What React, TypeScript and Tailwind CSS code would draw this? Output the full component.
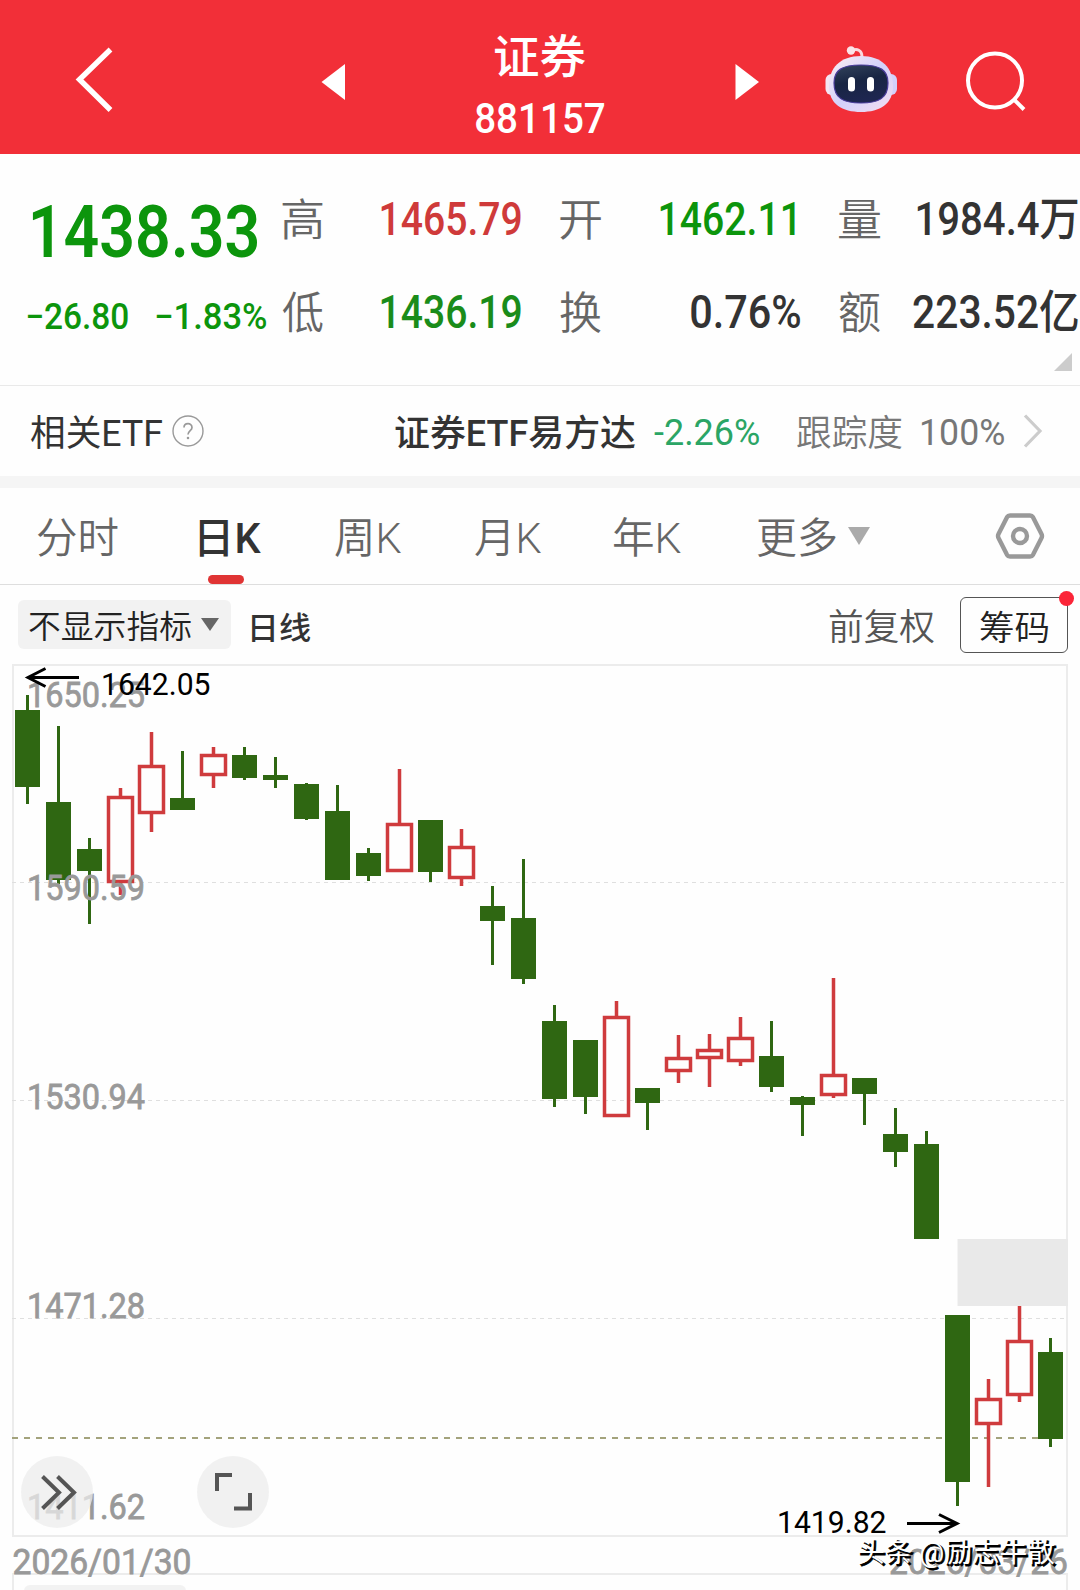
import { useLayoutEffect, useRef } from "react";
import type { ReactNode } from "react";

/** Text condensed or widened so that its ink spans exactly `w` pixels. */
function Fit({ w, className = "", children }: { w: number; className?: string; children: string }) {
  const ref = useRef<HTMLSpanElement>(null);
  useLayoutEffect(() => {
    const el = ref.current;
    const ctx = document.createElement("canvas").getContext("2d");
    if (!el || !ctx) return;
    const cs = getComputedStyle(el);
    ctx.font = `${cs.fontWeight} ${cs.fontSize} ${cs.fontFamily}`;
    const m = ctx.measureText(children);
    const k = w / (m.actualBoundingBoxLeft + m.actualBoundingBoxRight);
    el.style.transform = `translateX(${m.actualBoundingBoxLeft * k}px) scaleX(${k})`;
  }, [w, children]);
  return (
    <span className={`block shrink-0 leading-none ${className}`} style={{ width: w }}>
      <span ref={ref} className="inline-block origin-left whitespace-nowrap">
        {children}
      </span>
    </span>
  );
}

function Header() {
  return (
    <header className="flex h-[154px] items-start bg-[#f22f38] text-white">
      <svg className="ml-[72px] mt-[44px] h-[72px] w-[44px] shrink-0" viewBox="0 0 44 72" fill="none" stroke="#fff" strokeWidth="5.4">
        <path d="M38.5 5.5 L7.5 35.5 L38.5 66" />
      </svg>
      <svg className="ml-[205px] mt-[64px] h-[36px] w-[25px] shrink-0" viewBox="0 0 25 36" fill="#fff">
        <path d="M0.5 18 L24 0 V36 Z" />
      </svg>
      <div className="ml-[130px] flex w-[129px] flex-col items-center">
        <Fit w={91} className="mt-[34px] text-[46px] font-medium">证券</Fit>
        <Fit w={129} className="mt-[18px] text-[42px] font-medium">881157</Fit>
      </div>
      <svg className="ml-[130px] mt-[64px] h-[36px] w-[25px] shrink-0" viewBox="0 0 25 36" fill="#fff">
        <path d="M24 18 L0.5 0 V36 Z" />
      </svg>
      <svg className="ml-[63px] mt-[44px] h-[72px] w-[76px] shrink-0" viewBox="823 44 76 72">
        <defs>
          <linearGradient id="shell" x1="0" y1="0" x2="1" y2="1">
            <stop offset="0" stopColor="#fdeef2" />
            <stop offset="0.5" stopColor="#d3d2fb" />
            <stop offset="1" stopColor="#f3dcf0" />
          </linearGradient>
          <linearGradient id="visor" x1="0" y1="0" x2="0.3" y2="1">
            <stop offset="0" stopColor="#33445c" />
            <stop offset="0.5" stopColor="#182543" />
            <stop offset="1" stopColor="#1e2650" />
          </linearGradient>
        </defs>
        <path d="M851 51 C857 48 862 50 862 57" fill="none" stroke="#fbd9de" strokeWidth="3" />
        <circle cx="851" cy="50.5" r="4.2" fill="#fbe3e8" />
        <rect x="825.5" y="74" width="12" height="21" rx="6" fill="#f4e6f3" />
        <rect x="885" y="74" width="12" height="21" rx="6" fill="#d3d0fb" />
        <path d="M861 56 C882 56 893 68 893 86 C893 104 880 112 861 112 C842 112 829 104 829 86 C829 68 840 56 861 56 Z" fill="url(#shell)" />
        <path d="M861 65 C880 65 888 70 888 83 C888 98 879 103 861 103 C843 103 834 98 834 83 C834 70 842 65 861 65 Z" fill="url(#visor)" stroke="#4a3d9c" strokeWidth="1.2" />
        <rect x="848" y="77" width="7" height="14.5" rx="3.5" fill="#fff" />
        <rect x="867" y="77" width="7" height="14.5" rx="3.5" fill="#fff" />
      </svg>
      <svg className="ml-[63px] mt-[48px] h-[66px] w-[68px] shrink-0" viewBox="962 48 68 66" fill="none" stroke="#fff" strokeWidth="4">
        <circle cx="995" cy="80.5" r="27" />
        <path d="M1013.5 99 L1024 109.5" />
      </svg>
    </header>
  );
}

function Cell({ label, w, color, children }: { label: string; w: number; color: string; children: string }) {
  return (
    <div className="flex h-[46px] items-center justify-between">
      <Fit w={41} className="pt-[3px] text-[44px] font-[350] text-[#666]">{label}</Fit>
      <Fit w={w} className={`text-[46px] font-medium ${color}`}>{children}</Fit>
    </div>
  );
}

function Quote() {
  return (
    <section className="relative flex h-[232px] border-b border-[#e9e9e9]">
      <div className="w-[282px] shrink-0 text-[#0c950c]">
        <Fit w={224} className="ml-[33px] mt-[42px] text-[73px] font-semibold">1438.33</Fit>
        <div className="ml-[27px] mt-[30px] flex gap-[28px]">
          <Fit w={101} className="text-[36px] font-medium">−26.80</Fit>
          <Fit w={110} className="text-[36px] font-medium">−1.83%</Fit>
        </div>
      </div>
      <div className="mr-[2px] mt-[42px] grid h-[139px] grow grid-cols-3 content-between gap-x-[39px]">
        <Cell label="高" w={140} color="text-[#cf3a3a]">1465.79</Cell>
        <Cell label="开" w={135} color="text-[#0c950c] mr-[5px]">1462.11</Cell>
        <Cell label="量" w={161} color="text-[#333]">1984.4万</Cell>
        <Cell label="低" w={140} color="text-[#1a8c1a]">1436.19</Cell>
        <Cell label="换" w={109} color="text-[#333]">0.76%</Cell>
        <Cell label="额" w={165} color="text-[#333]">223.52亿</Cell>
      </div>
      <svg className="absolute bottom-[14px] right-[8px] h-[18px] w-[18px]" viewBox="0 0 18 18">
        <path d="M18 0 V18 H0 Z" fill="#ccc" />
      </svg>
    </section>
  );
}

function EtfRow() {
  return (
    <section className="flex h-[90px] items-center pl-[31px] text-[36px] text-[#333]">
      <Fit w={131} className="pt-[5px]">相关ETF</Fit>
      <svg className="ml-[10px] h-[32px] w-[32px]" viewBox="0 0 32 32" fill="none" stroke="#999" strokeWidth="1.4">
        <circle cx="16" cy="16" r="15" />
        <path d="M12 12.6 C12 7.4 20 7.4 20 12.4 C20 15.6 16 15.6 16 19.6" strokeWidth="1.7" />
        <circle cx="16" cy="23" r="0.6" fill="#999" />
      </svg>
      <Fit w={240} className="ml-[191px] pt-[5px] font-medium">证券ETF易方达</Fit>
      <Fit w={105} className="ml-[19px] pt-[4px] text-[#2ba565]">-2.26%</Fit>
      <Fit w={105} className="ml-[38px] pt-[5px] font-[350] text-[#777]">跟踪度</Fit>
      <Fit w={82} className="ml-[20px] pt-[4px] text-[#777]">100%</Fit>
      <svg className="ml-[18px] h-[34px] w-[22px]" viewBox="0 0 22 34" fill="none" stroke="#ccc" strokeWidth="3.2">
        <path d="M3 1.5 L18 17 L3 32.5" />
      </svg>
    </section>
  );
}

function Tab({ w, ml, active = false, children }: { w: number; ml: string; active?: boolean; children: string }) {
  return (
    <div className={`relative flex h-full items-center ${ml}`}>
      <Fit w={w} className={active ? "pt-[5px] text-[42px] font-medium text-[#333]" : "pt-[5px] text-[42px] font-[350] text-[#666]"}>{children}</Fit>
      {active && <span className="absolute bottom-0 left-[8px] h-[9px] w-[36px] rounded-full bg-[#e03434]" />}
    </div>
  );
}

function Tabs() {
  return (
    <nav className="flex h-[97px] items-center border-b border-[#dedede]">
      <Tab w={81} ml="ml-[37px]">分时</Tab>
      <Tab w={61} ml="ml-[82px]" active>日K</Tab>
      <Tab w={66} ml="ml-[74px]">周K</Tab>
      <Tab w={66} ml="ml-[74px]">月K</Tab>
      <Tab w={67} ml="ml-[73px]">年K</Tab>
      <Tab w={78} ml="ml-[77px]">更多</Tab>
      <svg className="ml-[12px] h-[18px] w-[22px]" viewBox="0 0 22 18">
        <path d="M0 0 H22 L11 18 Z" fill="#aaa" />
      </svg>
      <svg className="ml-[125px] h-[48px] w-[50px]" viewBox="0 0 50 48" fill="none" stroke="#999" strokeWidth="4.4" strokeLinejoin="round">
        <path d="M15 3.5 H35 Q37 3.5 38 5.2 L46.5 22 Q47.5 24 46.5 26 L38 42.8 Q37 44.5 35 44.5 H15 Q13 44.5 12 42.8 L3.5 26 Q2.5 24 3.5 22 L12 5.2 Q13 3.5 15 3.5 Z" />
        <circle cx="25" cy="24" r="7" />
      </svg>
    </nav>
  );
}

function IndicatorBar() {
  return (
    <div className="flex h-[79px] items-start">
      <div className="ml-[18px] mt-[15px] flex h-[49px] w-[213px] items-center rounded-md bg-[#f2f2f2] pl-[11px]">
        <Fit w={162} className="pt-[4px] text-[32px] font-[350] text-[#222]">不显示指标</Fit>
        <svg className="ml-[10px] h-[13px] w-[18px]" viewBox="0 0 18 13">
          <path d="M0 0 H18 L9 13 Z" fill="#666" />
        </svg>
      </div>
      <Fit w={58} className="ml-[21px] mt-[28px] text-[31px] font-medium text-[#333]">日线</Fit>
      <Fit w={105} className="ml-[519px] mt-[25px] text-[36px] font-[350] text-[#555]">前复权</Fit>
      <div className="relative ml-[26px] mt-[12px] flex h-[56px] w-[108px] items-center justify-center rounded-md border border-[#555]">
        <Fit w={68} className="pt-[5px] text-[34px] font-[350] text-[#222]">筹码</Fit>
        <span className="absolute -right-[7px] -top-[7px] h-[15px] w-[15px] rounded-full bg-[#fb2538]" />
      </div>
    </div>
  );
}

type Candle = [up: 0 | 1, high: number, top: number, bottom: number, low: number];

const candles: Candle[] = [
  [0, 695, 710, 787, 804],
  [0, 726, 802, 880, 884],
  [0, 838, 849, 871, 924],
  [1, 788, 796, 883, 895],
  [1, 732, 765, 814, 832],
  [0, 751, 798, 810, 810],
  [1, 747, 754, 776, 788],
  [0, 747, 755, 778, 780],
  [0, 757, 775, 780, 788],
  [0, 783, 784, 819, 820],
  [0, 785, 811, 880, 880],
  [0, 848, 853, 876, 881],
  [1, 769, 823, 872, 872],
  [0, 820, 820, 872, 882],
  [1, 829, 846, 879, 886],
  [0, 886, 906, 921, 965],
  [0, 859, 918, 979, 984],
  [0, 1005, 1021, 1099, 1107],
  [0, 1040, 1040, 1097, 1114],
  [1, 1001, 1016, 1117, 1117],
  [0, 1088, 1088, 1103, 1130],
  [1, 1035, 1057, 1072, 1083],
  [1, 1034, 1049, 1059, 1087],
  [1, 1017, 1037, 1062, 1066],
  [0, 1021, 1056, 1087, 1092],
  [0, 1096, 1097, 1105, 1136],
  [1, 978, 1074, 1096, 1098],
  [0, 1078, 1078, 1094, 1125],
  [0, 1108, 1134, 1152, 1167],
  [0, 1131, 1144, 1239, 1239],
  [0, 1315, 1315, 1482, 1506],
  [1, 1379, 1398, 1425, 1487],
  [1, 1306, 1340, 1396, 1402],
  [0, 1338, 1352, 1439, 1447],
];

function CandleShape({ index, data }: { index: number; data: Candle }) {
  const [up, high, top, bottom, low] = data;
  const x = 15 + 31 * index;
  if (!up) {
    return (
      <g fill="#2f6712">
        <rect x={x + 11} y={high} width="3" height={low - high} />
        <rect x={x} y={top} width="25" height={bottom - top} />
      </g>
    );
  }
  return (
    <g fill="#cf3b3d">
      <rect x={x + 10.75} y={high} width="3.5" height={top - high} />
      <rect x={x + 10.75} y={bottom} width="3.5" height={low - bottom} />
      <rect x={x + 0.5} y={top + 1.5} width="24" height={bottom - top - 3} fill="none" stroke="#cf3b3d" strokeWidth="3.5" />
    </g>
  );
}

function AxisLabel({ x, y, w, children }: { x: number; y: number; w: number; children: ReactNode }) {
  return (
    <text x={x} y={y} textLength={w} lengthAdjust="spacingAndGlyphs" fontSize="35" fill="#999" stroke="#999" strokeWidth="0.8">
      {children}
    </text>
  );
}

function ExtremeLabel({ x, y, children }: { x: number; y: number; children: ReactNode }) {
  return (
    <text x={x} y={y} textLength="109.5" lengthAdjust="spacingAndGlyphs" fontSize="30.5" fill="#000">
      {children}
    </text>
  );
}

function Chart() {
  return (
    <svg className="block h-[926px] w-[1080px]" viewBox="0 664 1080 926">
      <rect x="13" y="665" width="1054" height="871" fill="none" stroke="#ececec" strokeWidth="2" />
      <path d="M13 1590 V1574 H1067 V1590" fill="none" stroke="#ececec" strokeWidth="2" />
      <rect x="24" y="1585" width="162" height="30" rx="6" fill="#f2f2f2" />
      <path d="M12 882.5 H1066 M12 1100.5 H1066 M12 1318.5 H1066" stroke="#dfdfdf" strokeWidth="1" strokeDasharray="4 4" />
      <path d="M12 1438 H1040" stroke="#a3a37c" strokeWidth="2" strokeDasharray="6 6" />
      <rect x="957.5" y="1239" width="110.5" height="67" fill="#e9e9e9" />
      {candles.map((c, i) => (
        <CandleShape key={i} index={i} data={c} />
      ))}
      <AxisLabel x={27} y={707} w={118}>1650.25</AxisLabel>
      <AxisLabel x={27} y={900} w={118}>1590.59</AxisLabel>
      <AxisLabel x={27} y={1109} w={118}>1530.94</AxisLabel>
      <AxisLabel x={27} y={1318} w={118}>1471.28</AxisLabel>
      <AxisLabel x={27} y={1519} w={118}>1411.62</AxisLabel>
      <AxisLabel x={12.5} y={1574} w={179}>2026/01/30</AxisLabel>
      <AxisLabel x={889} y={1574} w={179}>2026/03/26</AxisLabel>
      <path d="M79 677.5 H28 M45.5 668.5 L28 677.5 L45.5 686.5" fill="none" stroke="#000" strokeWidth="3" />
      <ExtremeLabel x={101} y={695}>1642.05</ExtremeLabel>
      <path d="M907 1523.5 H957 M939 1514.5 L957 1523.5 L939 1532.5" fill="none" stroke="#000" strokeWidth="3" />
      <ExtremeLabel x={777} y={1533}>1419.82</ExtremeLabel>
      <g fill="#ececec" fillOpacity="0.75">
        <circle cx="57" cy="1492" r="36" />
        <circle cx="233" cy="1492" r="36" />
      </g>
      <g fill="none" stroke="#555" strokeWidth="4">
        <path d="M42.5 1476.5 L59 1492.5 L42.5 1508.5 M57.5 1476.5 L74 1492.5 L57.5 1508.5" />
        <path d="M217 1491 V1475 H232 M234 1508.5 H250 V1493" />
      </g>
      <g fontSize="27.5">
        <text x="859" y="1564" textLength="198" lengthAdjust="spacingAndGlyphs" fill="#000" stroke="#000" strokeWidth="0.8">头条 @励志牛散</text>
        <text x="857" y="1562" textLength="198" lengthAdjust="spacingAndGlyphs" fill="#fff">头条 @励志牛散</text>
      </g>
    </svg>
  );
}

export default function App() {
  return (
    <main className="h-[1590px] w-[1080px] overflow-hidden bg-[#fefefe] font-[Roboto,'Noto_Sans_CJK_SC',sans-serif]">
      <Header />
      <Quote />
      <EtfRow />
      <div className="h-[12px] bg-[#f5f5f5]" />
      <Tabs />
      <IndicatorBar />
      <Chart />
    </main>
  );
}
